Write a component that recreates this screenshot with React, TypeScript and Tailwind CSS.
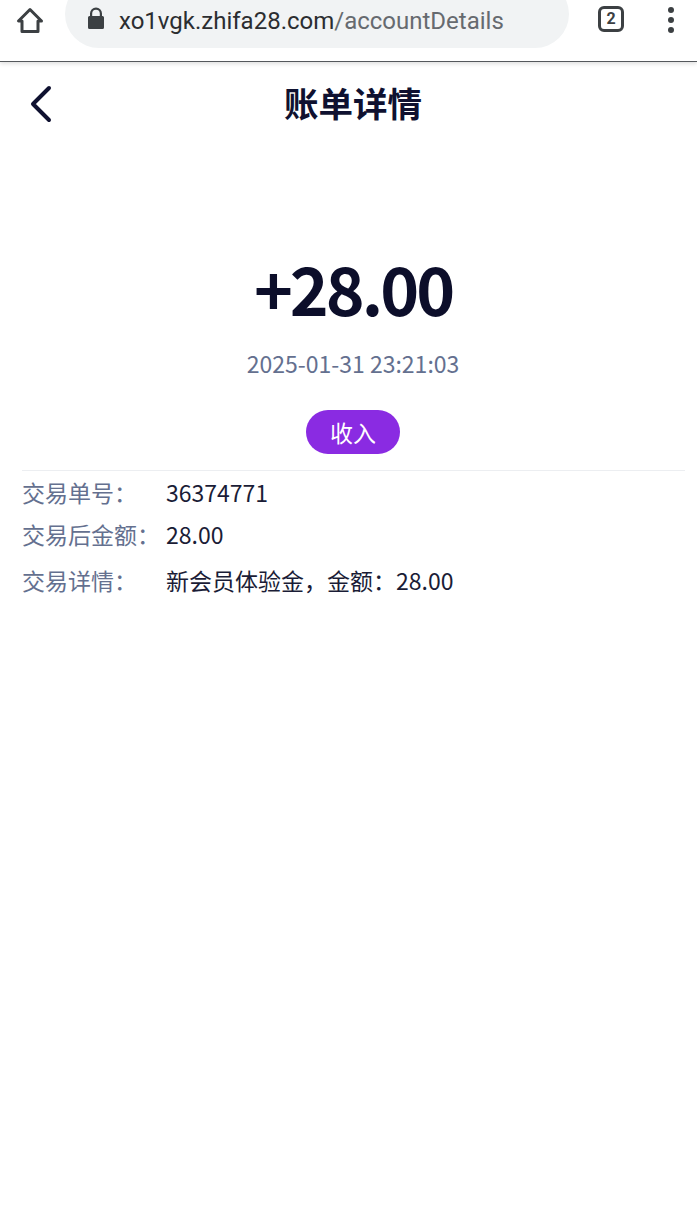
const cjk = "font-['Noto_Sans_CJK_SC','Noto_Sans',sans-serif]";

function DetailRow({ label, value, className }: { label: string; value: string; className: string }) {
  return (
    <div className={`flex items-center ${className}`}>
      <span className="w-[144px] shrink-0 text-[#64708f]">{label}</span>
      <span className="text-[#1a1c36]">{value}</span>
    </div>
  );
}

export default function App() {
  return (
    <div className="h-[1221px] w-[697px] overflow-hidden bg-white">
      {/* Browser toolbar */}
      <div className="relative flex h-[62px] items-start border-b border-[#55585c] bg-white font-['Roboto',sans-serif] shadow-[0_2px_4px_rgba(0,0,0,0.12)]">
        <div className="flex h-[48px] w-[65px] items-center justify-center pb-[8px] pr-[6px]">
          <svg width="28" height="28" viewBox="0 0 28 28" fill="none" stroke="#3c4043" strokeWidth="3" strokeLinejoin="round" strokeLinecap="round">
            <path d="M14 3.500 L2.500 15 H6 V25.500 H22 V15 H25.500 Z" />
          </svg>
        </div>
        <div className="-mt-[20px] flex h-[68px] w-[504px] items-center rounded-full bg-[#f1f3f4] pl-[22px] pt-[20px]">
          <svg width="18" height="24" viewBox="0 0 18 24" fill="#3c4043" className="mb-[10px] shrink-0">
            <path d="M3 9V6.500a6 6 0 0 1 12 0V9h.5A1.500 1.500 0 0 1 17 10.500V20.500A1.500 1.500 0 0 1 15.500 22H2.500A1.500 1.500 0 0 1 1 20.500V10.500A1.500 1.500 0 0 1 2.500 9ZM5.200 9h7.600V6.500a3.800 3.800 0 0 0-7.600 0Z" />
          </svg>
          <span className="mb-[6px] ml-[14px] whitespace-nowrap text-[24px] leading-none text-[#2b2d30]">
            xo1vgk.zhifa28.com<span className="text-[#666a6f]">/accountDetails</span>
          </span>
        </div>
        <div className="ml-[29px] mt-[6px] flex h-[26px] w-[26px] items-center justify-center rounded-[6px] border-[3px] border-[#3c4043] text-[16px] font-bold leading-none text-[#3c4043]">
          2
        </div>
        <div className="ml-[44px] mt-[7px] flex flex-col gap-[4px]">
          <span className="h-[6px] w-[6px] rounded-full bg-[#3c4043]" />
          <span className="h-[6px] w-[6px] rounded-full bg-[#3c4043]" />
          <span className="h-[6px] w-[6px] rounded-full bg-[#3c4043]" />
        </div>
      </div>

      <div className={cjk}>
        {/* Page header */}
        <div className="relative flex h-[84px] items-center justify-center pb-[4px] pl-[9px]">
          <svg className="absolute left-[28px] top-[22px]" width="26" height="40" viewBox="0 0 26 40" fill="none" stroke="#0f1130" strokeWidth="4" strokeLinecap="round" strokeLinejoin="round">
            <path d="M21 4 L5 20 L21 36" />
          </svg>
          <h1 className="text-[34.500px] font-bold leading-none text-[#0f1130]">账单详情</h1>
        </div>

        {/* Amount */}
        <div className="flex flex-col items-center pl-[9px] pt-[96px]">
          <div className="text-[66px] font-bold leading-[90px] tracking-[-3px] text-[#0c0e2a]">+28.00</div>
          <div className="mt-[14px] text-[23px] leading-[34px] text-[#64708f]">2025-01-31 23:21:03</div>
          <div className="mt-[30px] flex h-[44px] w-[94px] items-center justify-center rounded-full bg-[#8a2be2] text-[23px] text-white">
            收入
          </div>
        </div>

        {/* Details */}
        <div className="ml-[22px] mr-[12px] mt-[16px] border-t border-[#eceef1] text-[23px] leading-[34px]">
          <DetailRow className="mt-[4px]" label="交易单号：" value="36374771" />
          <DetailRow className="mt-[8px]" label="交易后金额：" value="28.00" />
          <DetailRow className="mt-[12px]" label="交易详情：" value="新会员体验金，金额：28.00" />
        </div>
      </div>
    </div>
  );
}
